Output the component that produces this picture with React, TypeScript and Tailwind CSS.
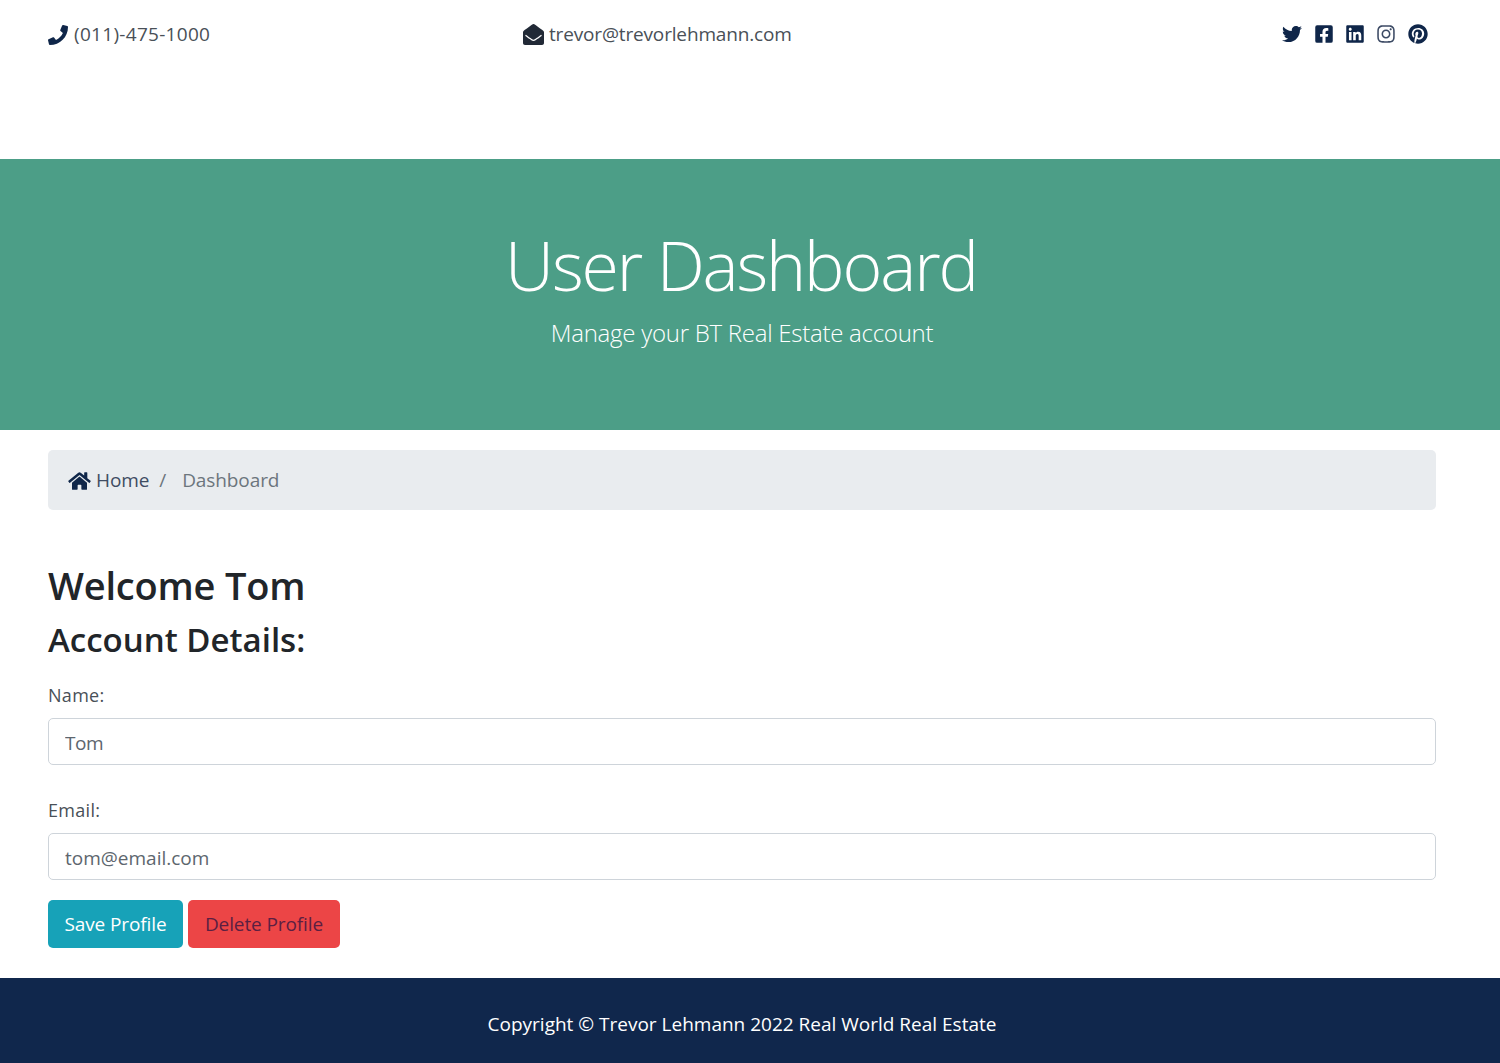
import React from 'react'
import { FaPhone, FaEnvelopeOpen, FaTwitter, FaFacebookSquare, FaLinkedin, FaInstagram, FaPinterest, FaHome } from 'react-icons/fa'

const font = "font-['Open_Sans','Noto_Sans',sans-serif]"

export default function App() {
    return (
        <div className={`${font} bg-white text-[#212529] min-h-[1063px] flex flex-col`}>
            {/* Top bar */}
            <div className="h-[159px] px-[48px] pt-[20px] flex items-start">
                <div className="w-[475px] flex items-center h-[29px] text-[#495057] text-[19px] tracking-[0.3px]">
                    <FaPhone className="w-[20px] h-[20px] mr-[6px] text-[#0f2649]" />
                    (011)-475-1000
                </div>
                <div className="flex items-center h-[29px] text-[#495057] text-[19px] tracking-[-0.16px]">
                    <FaEnvelopeOpen className="w-[21px] h-[21px] mr-[5px] text-[#212936]" />
                    trevor@trevorlehmann.com
                </div>
                <div className="ml-auto mr-[24px] flex items-center h-[28px] gap-[11px] text-[#0f2649]">
                    <FaTwitter className="w-[20px] h-[20px] mr-[1px]" />
                    <FaFacebookSquare className="w-[20px] h-[20px]" />
                    <FaLinkedin className="w-[20px] h-[20px]" />
                    <FaInstagram className="w-[20px] h-[20px] text-[#3c4a64]" />
                    <FaPinterest className="w-[20px] h-[20px] ml-[1px]" />
                </div>
            </div>

            {/* Hero */}
            <div className="h-[271px] bg-[#4c9e87] text-white flex flex-col items-center pt-[64px] pr-[16px]">
                <h1 className="text-[68px] leading-[84px] font-light tracking-[-2.1px] -translate-x-[1px]">User Dashboard</h1>
                <p className="text-[24px] leading-[36px] mt-[8px] font-light tracking-[-0.26px]">Manage your BT Real Estate account</p>
            </div>

            {/* Breadcrumb */}
            <div className="px-[48px] pr-[64px] pt-[20px]">
                <div className="h-[60px] bg-[#e9ecef] rounded-[5px] px-[20px] pt-[1px] flex items-center text-[19px] tracking-[-0.1px]">
                    <FaHome className="w-[23px] h-[20px] mr-[5px] text-[#0f2649]" />
                    <span className="text-[#3f4d63]">Home</span>
                    <span className="text-[#6c757d] ml-[10px]">/</span>
                    <span className="text-[#6c757d] ml-[16px]">Dashboard</span>
                </div>
            </div>

            {/* Profile form */}
            <div className="px-[48px] pr-[64px] pt-[52px] flex-1">
                <h2 className="text-[38px] leading-[46px] font-semibold tracking-[-0.2px]">Welcome Tom</h2>
                <h3 className="text-[33px] leading-[42px] mt-[11px] font-semibold">Account Details:</h3>
                <label className="block text-[18px] leading-[28px] mt-[20px] text-[#495057] tracking-[0.3px]">Name:</label>
                <input
                    readOnly
                    value="Tom"
                    className="block w-full h-[47px] mt-[9px] px-[16px] pt-[2px] border border-[#ced4da] rounded-[5px] text-[19px] tracking-[-0.5px] text-[#5d666e] outline-none"
                />
                <label className="block text-[18px] leading-[28px] mt-[31px] text-[#495057] tracking-[0.3px]">Email:</label>
                <input
                    readOnly
                    value="tom@email.com"
                    className="block w-full h-[47px] mt-[9px] px-[16px] pt-[2px] border border-[#ced4da] rounded-[5px] text-[19px] text-[#5d666e] outline-none"
                />
                <div className="flex gap-[5px] mt-[20px]">
                    <button className="h-[48px] w-[135px] bg-[#17a2b8] text-white rounded-[5px] text-[19px] tracking-[-0.1px]">Save Profile</button>
                    <button className="h-[48px] w-[152px] bg-[#ec4546] text-[#5b1f42] rounded-[5px] text-[19px] tracking-[-0.1px]">Delete Profile</button>
                </div>
            </div>

            {/* Footer */}
            <div className="h-[85px] bg-[#10274c] text-white flex items-center justify-center pt-[8px] pr-[16px] text-[19px]">
                Copyright © Trevor Lehmann 2022 Real World Real Estate
            </div>
        </div>
    )
}
